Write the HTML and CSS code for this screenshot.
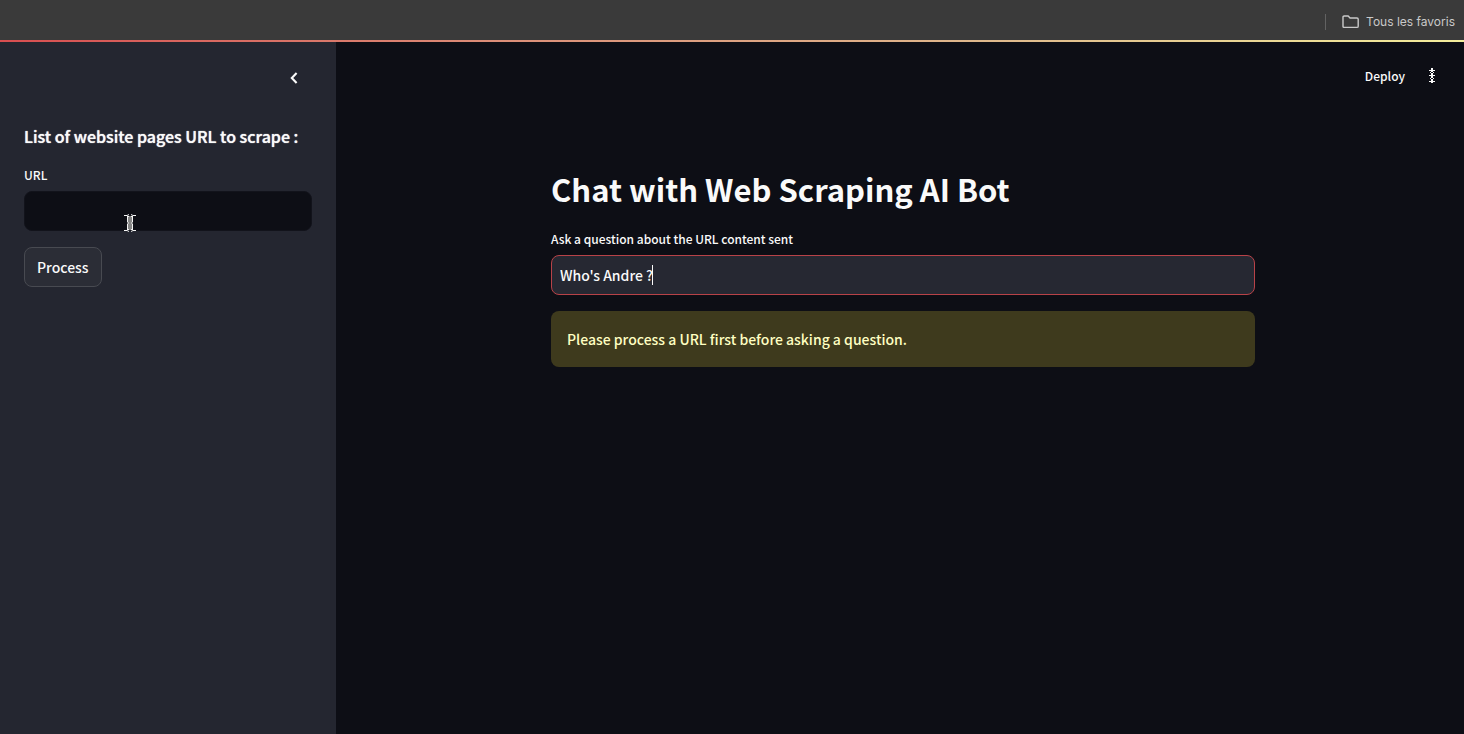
FILE: index.html
```html
<!DOCTYPE html>
<html lang="en">
<head>
<meta charset="utf-8">
<meta name="viewport" content="width=device-width, initial-scale=1">
<title>Chat with Web Scraping AI Bot</title>
<link rel="stylesheet" href="styles.css">
</head>
<body>
<div class="bookmarks">
  <span class="divider"></span>
  <a class="favorites" href="#">
    <svg width="18" height="14" viewBox="0 0 18 14" fill="none" stroke="#c9c9c9" stroke-width="1.4" stroke-linejoin="round"><path d="M1 11.6V2.2Q1 1 2.2 1H6.2L8 3H15Q16.2 3 16.2 4.2V11.2Q16.2 12.4 15 12.4H2.2Q1 12.4 1 11.6Z"/></svg>
    <span>Tous les favoris</span>
  </a>
</div>
<div class="rainbow"></div>
<div class="app">
  <aside class="sidebar">
    <div class="sidebar-top">
      <button class="icon-button" type="button" aria-label="Collapse sidebar">
        <svg width="20" height="20" viewBox="0 0 20 20" fill="none" stroke="#fafafa" stroke-width="2.1"><path d="M12.6 5 7.8 10l4.8 5"/></svg>
      </button>
    </div>
    <h2 class="sidebar-title">List of website pages URL to scrape :</h2>
    <label class="label" for="url">URL</label>
    <div class="field">
      <input class="input input-dark" id="url" type="text">
      <svg class="pointer" width="12" height="20" viewBox="0 0 12 20" fill="none"><path d="M4 3V17H8V3Z" fill="#858585"/><path d="M0 2.500H3L5 1.500M12 2.500H9L7 1.500M3 3.500H5M9 3.500H7M3.500 4V9M8.500 4V9M3 10H5M9 10H7M3.500 11V16M8.500 11V16M3 16.500H5M9 16.500H7M0 17.500H3L5 18.500M12 17.500H9L7 18.500" stroke="#f4f4f4"/></svg>
    </div>
    <button class="process" type="button">Process</button>
  </aside>
  <main class="main">
    <header class="toolbar">
      <button class="deploy" type="button">Deploy</button>
      <button class="icon-button" type="button" aria-label="Menu">
        <svg width="20" height="20" viewBox="0 0 20 20" fill="#fafafa"><path d="M9 2h2v1H9zM7 4h6v1H7zM9 3h2v3H9zM8 6h1v1H8zM11 6h1v1h-1zM9 7h2v1H9zM7 9h6v1H7zM9 8h2v4H9zM8 12h1v1H8zM11 12h1v1h-1zM9 13h2v1H9zM7 15h6v1H7zM9 14h2v3H9z"/></svg>
      </button>
    </header>
    <section class="content">
      <h1 class="title">Chat with Web Scraping AI Bot</h1>
      <label class="label" for="question">Ask a question about the URL content sent</label>
      <div class="field">
        <input class="input input-active" id="question" type="text" value="Who's Andre ?">
        <span class="caret-track" aria-hidden="true"><span class="caret"></span></span>
      </div>
      <div class="warning" role="alert">Please process a URL first before asking a question.</div>
    </section>
  </main>
</div>
</body>
</html>
```
FILE: styles.css
```css
* { box-sizing: border-box; }
body {
  margin: 0;
  min-height: 100vh;
  display: flex;
  flex-direction: column;
  background: #0d0e15;
  color: #fafafa;
  font: 500 14px/24px "Noto Sans CJK SC", "Noto Sans", sans-serif;
}
button, input { font: inherit; color: inherit; }
button { cursor: pointer; }
h1, h2 { margin: 0; }
svg { display: block; }

.bookmarks {
  height: 40px;
  padding: 4px 9px 0 0;
  display: flex;
  align-items: center;
  justify-content: flex-end;
  gap: 16px;
  background: #3a3a3a;
}
.divider { width: 1px; height: 16px; background: #626262; }
.favorites {
  display: flex;
  align-items: center;
  gap: 6px;
  color: #c9c9c9;
  font: 12px/16px Inter, "Liberation Sans", sans-serif;
  text-decoration: none;
}
.rainbow {
  height: 2px;
  background: linear-gradient(90deg, #d84e50, #dc8e78 34%, #dfb88c 67%, #f4ee9c);
}
.app { flex: 1; display: flex; }

.sidebar {
  width: 336px;
  flex: none;
  padding: 24px;
  background: #242630;
}
.sidebar-top { display: flex; justify-content: flex-end; padding: 2px 8px 0 0; }
.icon-button { padding: 0; border: 0; background: none; }
.sidebar-title {
  padding: 36px 0 15px;
  font-size: 16px;
  line-height: 24px;
  font-weight: 500;
  text-shadow: 0 0 1px #fafafa;
  white-space: nowrap;
}
.label { display: block; margin-bottom: 4px; font-size: 12px; line-height: 24px; }
.field { position: relative; margin-bottom: 16px; }
.input {
  display: block;
  width: 100%;
  height: 40px;
  padding: 0 8px;
  border: 1px solid transparent;
  border-radius: 8px;
  outline: 0;
}
.input-dark { background: #0d0e15; border-color: #12131b; }
.input-active { background: #262832; border-color: #b84248; }
.pointer { position: absolute; left: 100px; top: 22px; }
.process {
  height: 40px;
  padding: 0 12px;
  border: 1px solid #484a51;
  border-radius: 8px;
  background: #2b2d36;
}

.main { flex: 1; padding-left: 6px; }
.toolbar {
  display: flex;
  align-items: center;
  justify-content: flex-end;
  gap: 17px;
  padding: 22px 22px 0 0;
}
.deploy { padding: 0; border: 0; background: none; font-size: 12px; line-height: 24px; }
.content { max-width: 704px; margin: 0 auto; padding-top: 75px; }
.title { padding-bottom: 12px; font-size: 31px; line-height: 52px; font-weight: 700; }
.caret-track { position: absolute; left: 101px; top: 10px; pointer-events: none; }
.caret { display: block; width: 1px; height: 20px; background: #fafafa; }
.warning {
  padding: 16px;
  border-radius: 8px;
  background: #3e3a1d;
  color: #ffffc2;
}
```
